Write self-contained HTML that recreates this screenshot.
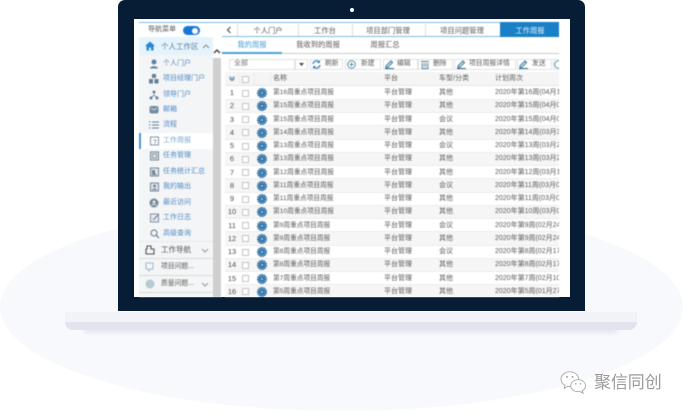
<!DOCTYPE html>
<html lang="zh"><head><meta charset="utf-8">
<style>
*{box-sizing:border-box}
html,body{margin:0;padding:0;background:#fff}
body{width:683px;height:413px;position:relative;overflow:hidden;font-family:"Liberation Sans","Noto Sans CJK SC",sans-serif}
div,svg,span{position:absolute}
.t{white-space:nowrap;font-size:7px;line-height:10px;color:#5a5a5a}
.c{transform:translateX(-50%)}
.s{color:#4f8ac4;font-size:7px;line-height:10px;white-space:nowrap;left:163px}
.r{left:225px;width:334px;height:13.25px;border-bottom:1px solid #ececec}
.o{background:#f6f6f6}
.r .t{top:1.5px}
.n{left:0;width:14px;text-align:center;color:#4d4d4d;font-size:7.5px!important}
.b{left:17px;top:3px;width:7px;height:7px;background:#fff;border:1px solid #c4c4c4}
.g{left:32px;top:1.5px;width:10px;height:10px}
.a{left:48px;font-size:6.7px!important}.p{left:159px}.k{left:214px}.w{left:270px;width:64px;overflow:hidden}
.tb{top:59px;height:11px;background:#fff;border:1px solid #e2e2e2}
.bl{color:#3f9bd6}
.ic{opacity:.85}
</style></head><body>
<div style="left:0;top:203px;width:683px;height:208px;border-radius:50%;background:#f8f9fd"></div>
<div style="left:118px;top:0;width:467px;height:311px;background:#061d35;border-radius:7px 7px 0 0"></div>
<div style="left:350px;top:8px;width:4px;height:4px;border-radius:50%;background:#fff"></div>
<div style="left:85px;top:328px;width:532px;height:5px;background:#e0e4ef;filter:blur(2.5px)"></div>
<div style="left:65px;top:312px;width:572px;height:10px;background:#f2f3f8"></div>
<div style="left:65px;top:322px;width:572px;height:8px;background:#e2e3ec;border-radius:0 0 14px 14px"></div>
<div style="left:134px;top:19px;width:436px;height:278px;background:#fff;overflow:hidden"></div>
<div id="app" style="left:0;top:0;width:683px;height:413px;filter:blur(.42px)">
<!-- sidebar -->
<div style="left:139px;top:22px;width:420px;height:1px;background:#7cbce0"></div>
<div style="left:139px;top:37px;width:74px;height:260px;background:#f4f5f6"></div>
<div class="t" style="left:148px;top:25px">导航菜单</div>
<div style="left:183px;top:26px;width:17px;height:9px;border-radius:5px;background:#1578d8"></div>
<div style="left:192px;top:27.5px;width:6px;height:6px;border-radius:50%;background:#fff"></div>
<div style="left:139px;top:37px;width:74px;height:18px;background:#e5f3fc"></div>
<svg style="left:145px;top:41px" width="10" height="10" viewBox="0 0 10 10"><path d="M5 .5 0 5h1.500v4.500h2.500V6.500h2v3h2.500V5H10z" fill="#2a86d2"/></svg>
<div class="t" style="left:161px;top:42px;font-size:7.500px;color:#5d7f99">个人工作区</div>
<svg style="left:202px;top:44px" width="8" height="5"><path d="M1 4 4 1l3 3" fill="none" stroke="#888"/></svg>
<div style="left:213px;top:37px;width:9px;height:260px;background:#fff"></div>
<div style="left:213px;top:58px;width:8px;height:239px;background:#cfcfcf"></div>
<svg style="left:213px;top:49px" width="8" height="5"><path d="M1 4 4 1l3 3" fill="none" stroke="#333" stroke-width="1.300"/></svg>
<div style="left:139px;top:133px;width:74px;height:16px;background:#fff"></div>
<div style="left:139px;top:133px;width:2px;height:16px;background:#4a90e2"></div>

<svg class="ic" style="left:149px;top:59px" width="10" height="10"><circle cx="5" cy="3" r="2.500" fill="#4a6d8c"/><path d="M1 9.500c0-3 8-3 8 0z" fill="#4a6d8c"/></svg>
<div class="s" style="top:59px">个人门户</div>
<svg class="ic" style="left:149px;top:74px" width="10" height="10"><path d="M3 0h4v4H3zM0 5h4v4.500H0zM5.500 5h4v4.500h-4z" fill="#4a6d8c"/></svg>
<div class="s" style="top:74px">项目经理门户</div>
<svg class="ic" style="left:149px;top:90px" width="10" height="10"><circle cx="5" cy="2" r="1.500" fill="#4a6d8c"/><circle cx="2" cy="8" r="1.500" fill="#4a6d8c"/><circle cx="8" cy="8" r="1.500" fill="#4a6d8c"/><path d="M5 3v2.500M2 7l3-1.500L8 7" stroke="#4a6d8c" fill="none" stroke-width=".7"/></svg>
<div class="s" style="top:90px">领导门户</div>
<svg class="ic" style="left:149px;top:105px" width="10" height="10"><rect y="1" x=".5" width="9" height="7.500" rx="2" fill="#5b7a95"/><path d="M2 3l3 2 3-2" fill="none" stroke="#dde" stroke-width=".8"/></svg>
<div class="s" style="top:105px">邮箱</div>
<svg class="ic" style="left:149px;top:120px" width="10" height="10"><path d="M0 2h1.500M3 2h7M0 5h1.500M3 5h7M0 8h1.500M3 8h7" stroke="#4a6d8c" stroke-width="1"/></svg>
<div class="s" style="top:120px">流程</div>
<svg class="ic" style="left:150px;top:136px" width="9" height="10"><rect x=".5" y="1" width="8" height="8" fill="none" stroke="#6d8397"/><path d="M3 4h3L4.500 8" fill="none" stroke="#6d8397" stroke-width=".8"/></svg>
<div class="s" style="top:136px;color:#7aa6cf">工作周报</div>
<svg class="ic" style="left:150px;top:151px" width="9" height="10"><rect x=".5" y="1" width="8" height="8" fill="#dfe4e8" stroke="#5d7488"/><rect x="2.500" y="3" width="4" height="4" fill="none" stroke="#5d7488" stroke-width=".8"/></svg>
<div class="s" style="top:151px">任务管理</div>
<svg class="ic" style="left:150px;top:167px" width="9" height="10"><rect x=".5" y="1" width="8" height="8" fill="#dfe4e8" stroke="#5d7488"/><path d="M2 3h3v3l2 2H2z" fill="#5d7488"/></svg>
<div class="s" style="top:167px">任务统计汇总</div>
<svg class="ic" style="left:150px;top:182px" width="9" height="10"><rect x=".5" y="1" width="8" height="8" fill="#dfe4e8" stroke="#5d7488"/><circle cx="4.500" cy="4" r="1.500" fill="#5d7488"/><path d="M2 8c0-2 5-2 5 0z" fill="#5d7488"/></svg>
<div class="s" style="top:182px">我的输出</div>
<svg class="ic" style="left:149px;top:198px" width="10" height="10"><circle cx="5" cy="5" r="4.500" fill="#5d7488"/><circle cx="5" cy="4" r="1.500" fill="#dfe4e8"/><path d="M2.500 7.500c1-1.500 4-1.500 5 0" stroke="#dfe4e8" fill="none"/></svg>
<div class="s" style="top:198px">最近访问</div>
<svg class="ic" style="left:150px;top:213px" width="10" height="10"><rect x=".5" y="1" width="8" height="8" fill="#e4e8ec" stroke="#6d8397"/><path d="M3 7l5-5" stroke="#5d7488" stroke-width="1.200"/></svg>
<div class="s" style="top:213px">工作日志</div>
<svg class="ic" style="left:150px;top:229px" width="10" height="10"><circle cx="4" cy="4" r="3" fill="none" stroke="#5d7488" stroke-width="1.200"/><path d="M6 6l3 3" stroke="#5d7488" stroke-width="1.300"/></svg>
<div class="s" style="top:229px">高级查询</div>

<div style="left:139px;top:241px;width:74px;height:1px;background:#e2ecf3"></div>
<div style="left:139px;top:258px;width:74px;height:1px;background:#d9d9d9"></div>
<div style="left:139px;top:275px;width:74px;height:1px;background:#d9d9d9"></div>
<div style="left:139px;top:292px;width:74px;height:1px;background:#d9d9d9"></div>
<svg style="left:145px;top:245px" width="10" height="10"><path d="M2 1h4v3h3v5H1V4h1z" fill="none" stroke="#555" stroke-width="1.100"/></svg>
<div class="t" style="left:161px;top:245px;font-size:7.500px;color:#555">工作导航</div>
<svg style="left:201px;top:248px" width="8" height="5"><path d="M1 1l3 3 3-3" fill="none" stroke="#999"/></svg>
<svg style="left:145px;top:262px" width="10" height="10"><path d="M1 1h7v6H5L4 9 3 7H1z" fill="none" stroke="#9dbccd"/></svg>
<div class="t" style="left:161px;top:262px;font-size:6.800px">项目问题...</div>
<svg style="left:145px;top:279px" width="10" height="10"><circle cx="5" cy="5" r="4.500" fill="#b7cad2"/></svg>
<div class="t" style="left:161px;top:279px;font-size:6.800px">质量问题...</div>
<svg style="left:201px;top:282px" width="8" height="5"><path d="M1 1l3 3 3-3" fill="none" stroke="#999"/></svg>

<!-- top tabs -->
<div style="left:222px;top:36px;width:337px;height:1px;background:#7ebcd9"></div>
<svg style="left:226px;top:26px" width="6" height="8"><path d="M4.500 1 1.500 4l3 3" fill="none" stroke="#555" stroke-width="1.200"/></svg>
<div style="left:237px;top:24px;width:1px;height:12px;background:#ddd"></div>
<div style="left:298px;top:24px;width:1px;height:12px;background:#ddd"></div>
<div style="left:352px;top:24px;width:1px;height:12px;background:#ddd"></div>
<div style="left:425px;top:24px;width:1px;height:12px;background:#ddd"></div>
<div class="t c" style="left:268px;top:26px;font-size:7.300px">个人门户</div>
<div class="t c" style="left:325px;top:26px;font-size:7.300px">工作台</div>
<div class="t c" style="left:388px;top:26px;font-size:7.300px">项目部门管理</div>
<div class="t c" style="left:462px;top:26px;font-size:7.300px">项目问题管理</div>
<div style="left:500px;top:22px;width:59px;height:15px;background:#197fc6"></div>
<div class="t c" style="left:530px;top:26px;font-size:7.300px;color:#e9f3fa">工作周报</div>
<!-- sub tabs -->
<div style="left:222px;top:53px;width:337px;height:1px;background:#ccc"></div>
<div style="left:222px;top:52px;width:60px;height:2px;background:#4aa0d8"></div>
<div class="t c bl" style="left:252px;top:40px;font-size:7.300px">我的周报</div>
<div class="t c" style="left:318px;top:40px;font-size:7.300px">我收到的周报</div>
<div class="t c" style="left:385px;top:40px;font-size:7.300px">周报汇总</div>
<!-- toolbar -->
<div class="tb" style="left:229px;width:66px"></div>
<div class="t" style="left:234px;top:59px;color:#777">全部</div>
<div class="tb" style="left:295px;width:13px"></div>
<svg style="left:299px;top:63px" width="5" height="3"><path d="M0 0h5L2.500 3z" fill="#444"/></svg>
<div class="tb" style="left:310px;width:33px"></div>
<svg style="left:312px;top:60px" width="9" height="9"><path d="M1 4a3.500 3.500 0 0 1 6-2M8 5a3.500 3.500 0 0 1-6 2" fill="none" stroke="#2f7fb0" stroke-width="1.200"/><path d="M8 0v3H5zM1 9V6h3z" fill="#2f7fb0"/></svg>
<div class="t" style="left:325px;top:59px;font-size:6.800px">刷新</div>
<div class="tb" style="left:345px;width:36px"></div>
<svg style="left:347px;top:60px" width="9" height="9"><circle cx="4.500" cy="4.500" r="3.800" fill="none" stroke="#5b8fa8"/><path d="M2.500 4.500h4M4.500 2.500v4" stroke="#5b8fa8"/></svg>
<div class="t" style="left:361px;top:59px;font-size:6.800px">新建</div>
<div class="tb" style="left:383px;width:35px"></div>
<svg style="left:385px;top:60px" width="9" height="9"><path d="M1 6l5-5 1.500 1.500-5 5H1zM0 8.500h9" stroke="#2f6d96" fill="none"/></svg>
<div class="t" style="left:397px;top:59px;font-size:6.800px">编辑</div>
<div class="tb" style="left:418px;width:35px"></div>
<svg style="left:421px;top:60px" width="8" height="9"><path d="M0 1.500h8M1 3v5.500h6V3M3 3v4M5 3v4" stroke="#5b7f95" fill="none" stroke-width=".9"/></svg>
<div class="t" style="left:433px;top:59px;font-size:6.800px">删除</div>
<div class="tb" style="left:454px;width:62px"></div>
<svg style="left:457px;top:60px" width="9" height="9"><path d="M1 6l5-5 1.500 1.500-5 5H1zM0 8.500h9" stroke="#2f6d96" fill="none"/></svg>
<div class="t" style="left:469px;top:59px;font-size:6.800px">项目周报详情</div>
<div class="tb" style="left:517px;width:35px"></div>
<svg style="left:519px;top:60px" width="9" height="9"><path d="M1 6l5-5 1.500 1.500-5 5H1zM0 8.500h9" stroke="#2f6d96" fill="none"/></svg>
<div class="t" style="left:532px;top:59px;font-size:6.800px">发送</div>
<div class="tb" style="left:553px;width:6px;border-right:0"></div>
<svg style="left:554px;top:60px" width="5" height="9"><circle cx="4.500" cy="4.500" r="3.800" fill="none" stroke="#5b8fa8"/></svg>
<!-- table header -->
<div style="left:225px;top:72px;width:334px;height:14px;background:#f5f5f5;border-bottom:1px solid #e5e5e5"></div>
<svg style="left:229px;top:76px" width="6" height="5"><path d="M.5.500 3 3 5.500.500M.5 2.500 3 5l2.500-2.500" stroke="#5d86a8" fill="none"/></svg>
<div class="b" style="left:242px;top:75.500px;background:#fff"></div>
<div style="left:239px;top:72px;width:1px;height:14px;background:#ececec"></div>
<div style="left:254px;top:72px;width:1px;height:14px;background:#ececec"></div>
<div style="left:270px;top:72px;width:1px;height:14px;background:#ececec"></div>
<div class="t" style="left:273px;top:74px">名称</div>
<div class="t" style="left:384px;top:74px">平台</div>
<div class="t" style="left:439px;top:74px">车型/分类</div>
<div class="t" style="left:495px;top:74px">计划周次</div>
<svg width="0" height="0"><defs><g id="gr"><circle cx="5" cy="5" r="3.900" fill="none" stroke="#24689f" stroke-width="2.200" stroke-dasharray="1.700 .5"/><circle cx="5" cy="5" r="2.900" fill="#2a6fa8"/><circle cx="5" cy="5" r="1.200" fill="#8fbbdc"/></g></defs></svg>
<!-- rows -->
<div class="r" style="top:86.500px"><span class="t n">1</span><span class="b"></span><svg class="g"><use href="#gr"/></svg><span class="t a">第16周重点项目周报</span><span class="t p">平台管理</span><span class="t k">其他</span><span class="t w">2020年第16周(04月13</span></div>
<div class="r o" style="top:99.750px"><span class="t n">2</span><span class="b"></span><svg class="g"><use href="#gr"/></svg><span class="t a">第15周重点项目周报</span><span class="t p">平台管理</span><span class="t k">其他</span><span class="t w">2020年第15周(04月06</span></div>
<div class="r" style="top:113px"><span class="t n">3</span><span class="b"></span><svg class="g"><use href="#gr"/></svg><span class="t a">第15周重点项目周报</span><span class="t p">平台管理</span><span class="t k">会议</span><span class="t w">2020年第15周(04月06</span></div>
<div class="r o" style="top:126.250px"><span class="t n">4</span><span class="b"></span><svg class="g"><use href="#gr"/></svg><span class="t a">第14周重点项目周报</span><span class="t p">平台管理</span><span class="t k">其他</span><span class="t w">2020年第14周(03月30</span></div>
<div class="r" style="top:139.500px"><span class="t n">5</span><span class="b"></span><svg class="g"><use href="#gr"/></svg><span class="t a">第13周重点项目周报</span><span class="t p">平台管理</span><span class="t k">会议</span><span class="t w">2020年第13周(03月23</span></div>
<div class="r o" style="top:152.750px"><span class="t n">6</span><span class="b"></span><svg class="g"><use href="#gr"/></svg><span class="t a">第13周重点项目周报</span><span class="t p">平台管理</span><span class="t k">其他</span><span class="t w">2020年第13周(03月23</span></div>
<div class="r" style="top:166px"><span class="t n">7</span><span class="b"></span><svg class="g"><use href="#gr"/></svg><span class="t a">第12周重点项目周报</span><span class="t p">平台管理</span><span class="t k">其他</span><span class="t w">2020年第12周(03月16</span></div>
<div class="r o" style="top:179.250px"><span class="t n">8</span><span class="b"></span><svg class="g"><use href="#gr"/></svg><span class="t a">第11周重点项目周报</span><span class="t p">平台管理</span><span class="t k">会议</span><span class="t w">2020年第11周(03月09</span></div>
<div class="r" style="top:192.500px"><span class="t n">9</span><span class="b"></span><svg class="g"><use href="#gr"/></svg><span class="t a">第11周重点项目周报</span><span class="t p">平台管理</span><span class="t k">其他</span><span class="t w">2020年第11周(03月09</span></div>
<div class="r o" style="top:205.750px"><span class="t n">10</span><span class="b"></span><svg class="g"><use href="#gr"/></svg><span class="t a">第10周重点项目周报</span><span class="t p">平台管理</span><span class="t k">其他</span><span class="t w">2020年第10周(03月02</span></div>
<div class="r" style="top:219px"><span class="t n">11</span><span class="b"></span><svg class="g"><use href="#gr"/></svg><span class="t a">第9周重点项目周报</span><span class="t p">平台管理</span><span class="t k">会议</span><span class="t w">2020年第9周(02月24</span></div>
<div class="r o" style="top:232.250px"><span class="t n">12</span><span class="b"></span><svg class="g"><use href="#gr"/></svg><span class="t a">第9周重点项目周报</span><span class="t p">平台管理</span><span class="t k">其他</span><span class="t w">2020年第9周(02月24</span></div>
<div class="r" style="top:245.500px"><span class="t n">13</span><span class="b"></span><svg class="g"><use href="#gr"/></svg><span class="t a">第8周重点项目周报</span><span class="t p">平台管理</span><span class="t k">会议</span><span class="t w">2020年第8周(02月17</span></div>
<div class="r o" style="top:258.750px"><span class="t n">14</span><span class="b"></span><svg class="g"><use href="#gr"/></svg><span class="t a">第8周重点项目周报</span><span class="t p">平台管理</span><span class="t k">其他</span><span class="t w">2020年第8周(02月17</span></div>
<div class="r" style="top:272px"><span class="t n">15</span><span class="b"></span><svg class="g"><use href="#gr"/></svg><span class="t a">第7周重点项目周报</span><span class="t p">平台管理</span><span class="t k">其他</span><span class="t w">2020年第7周(02月10</span></div>
<div class="r o" style="top:285.250px;height:11.750px;border-bottom:0;overflow:hidden"><span class="t n">16</span><span class="b"></span><svg class="g"><use href="#gr"/></svg><span class="t a">第5周重点项目周报</span><span class="t p">平台管理</span><span class="t k">其他</span><span class="t w">2020年第5周(01月27</span></div>
</div>
<!-- watermark -->
<svg style="left:559px;top:370px" width="29" height="24" viewBox="0 0 30 26"><ellipse cx="11" cy="10" rx="9.500" ry="8" fill="#fff" stroke="#aaa"/><path d="M6 16l-1 4 4-2.500" fill="#fff" stroke="#aaa"/><ellipse cx="20" cy="17" rx="8" ry="6.500" fill="#fff" stroke="#aaa"/><path d="M24 22l1.500 3-4-1.800" fill="#fff" stroke="#aaa"/><circle cx="8" cy="7.500" r="1" fill="#999"/><circle cx="14" cy="7.500" r="1" fill="#999"/><circle cx="17.500" cy="15" r=".8" fill="#999"/><circle cx="22.500" cy="15" r=".8" fill="#999"/></svg>
<div style="left:594px;top:372px;font-size:17px;line-height:21px;letter-spacing:-.1px;white-space:nowrap;color:#9a9a9a">聚信同创</div>
</body></html>
